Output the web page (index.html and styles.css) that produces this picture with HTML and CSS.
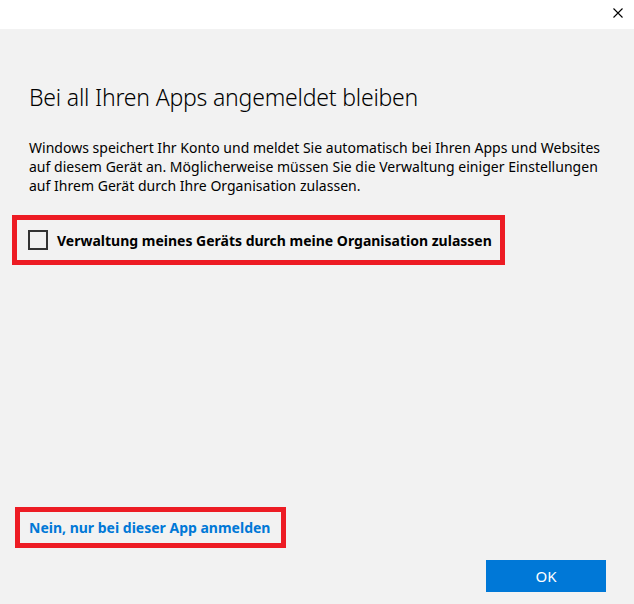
FILE: index.html
```
<!DOCTYPE html>
<html lang="de">

<head>
    <meta charset="UTF-8">
    <meta name="viewport" content="width=device-width, initial-scale=1.0">
    <title>Bei all Ihren Apps angemeldet bleiben</title>
    <link rel="stylesheet" href="styles.css">
</head>

<body>
    <div class="window">
        <div class="titlebar">
            <button class="close-btn" aria-label="Schließen">
                <svg width="10" height="10" viewBox="0 0 10 10">
                    <path d="M0.5 0.5 L9.5 9.5 M9.5 0.5 L0.5 9.5" stroke="#000" stroke-width="1.1" fill="none" />
                </svg>
            </button>
        </div>
        <main class="content">
            <h1 class="heading">Bei all Ihren Apps angemeldet bleiben</h1>
            <p class="description">Windows speichert Ihr Konto und meldet Sie automatisch bei Ihren Apps und Websites auf diesem Gerät an. Möglicherweise müssen Sie die Verwaltung einiger Einstellungen auf Ihrem Gerät durch Ihre Organisation zulassen.</p>
            <div class="highlight check-row">
                <label class="check-label">
                    <span class="check-box"></span>
                    Verwaltung meines Geräts durch meine Organisation zulassen
                </label>
            </div>
            <div class="spacer"></div>
            <div class="highlight link-row">
                <a href="#" class="app-link">Nein, nur bei dieser App anmelden</a>
            </div>
            <div class="footer">
                <button class="ok-btn">OK</button>
            </div>
        </main>
    </div>
</body>

</html>
```

FILE: styles.css
```
* {
    padding: 0px;
    margin: 0px;
    box-sizing: border-box;
}

body {
    background-color: #f2f2f2;
    font-family: 'Noto Sans', 'Open Sans', sans-serif;
    color: #000;
}

.window {
    display: flex;
    flex-direction: column;
    height: 604px;
}

.titlebar {
    height: 29px;
    background-color: #fff;
    display: flex;
    justify-content: flex-end;
    align-items: flex-start;
}

.close-btn {
    border: none;
    background: none;
    width: 46px;
    height: 29px;
    padding: 8px 11px 0 0;
    display: flex;
    justify-content: flex-end;
}

.content {
    flex: 1;
    display: flex;
    flex-direction: column;
    padding: 0 28px 12px 12px;
}

.heading {
    font-weight: 300;
    font-size: 23px;
    line-height: 30px;
    margin: 53px 0 0 17px;
    letter-spacing: -0.2px;
}

.description {
    font-size: 14px;
    line-height: 19px;
    margin: 26px 0 0 17px;
    width: 572px;
    letter-spacing: 0.02px;
}

.highlight {
    border: 5px solid #ed1c24;
}

.check-row {
    width: 493px;
    height: 50px;
    margin-top: 20px;
    display: flex;
    align-items: center;
    padding-left: 11px;
}

.check-label {
    display: flex;
    align-items: center;
    gap: 9px;
    font-weight: bold;
    font-size: 14px;
}

.check-box {
    width: 20px;
    height: 20px;
    border: 2px solid #333;
}

.spacer {
    flex: 1;
}

.link-row {
    width: 271px;
    height: 41px;
    margin-left: 3px;
    display: flex;
    align-items: center;
    padding-left: 9px;
}

.app-link {
    color: #0078d7;
    font-weight: bold;
    font-size: 14px;
    text-decoration: none;
}

.footer {
    display: flex;
    justify-content: flex-end;
    margin-top: 12px;
}

.ok-btn {
    width: 120px;
    height: 32px;
    border: none;
    background-color: #0078d7;
    color: #fff;
    font-family: 'Noto Sans', 'Open Sans', sans-serif;
    font-size: 15px;
}
```
